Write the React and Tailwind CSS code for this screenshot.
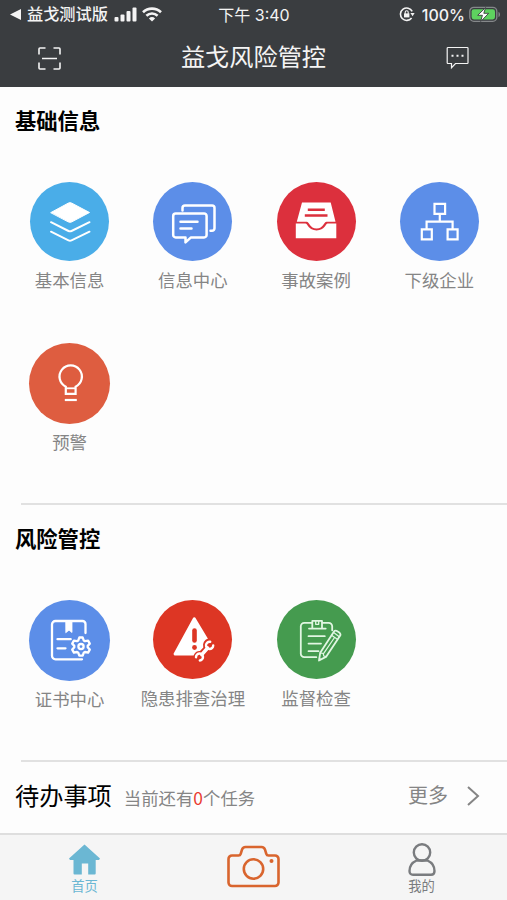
import clsx from "clsx";

const basics = [
  { label: "基本信息", color: "bg-[#4aade8]", Icon: LayersIcon },
  { label: "信息中心", color: "bg-[#5c8ee8]", Icon: MessagesIcon },
  { label: "事故案例", color: "bg-[#dc303d]", Icon: InboxIcon },
  { label: "下级企业", color: "bg-[#5c8ee8]", Icon: OrgIcon },
  { label: "预警", color: "bg-[#de5d40]", Icon: BulbIcon, large: true },
];

const risks = [
  { label: "证书中心", color: "bg-[#5c8ee8]", Icon: CertificateIcon, large: true },
  { label: "隐患排查治理", color: "bg-[#dd3624]", Icon: HazardIcon },
  { label: "监督检查", color: "bg-[#459b4f]", Icon: InspectIcon },
];

export default function App() {
  return (
    <div className="flex h-[900px] w-[507px] flex-col overflow-hidden bg-[#fdfdfd] font-['Liberation_Sans','Noto_Sans_CJK_SC',sans-serif] text-black">
      <header className="h-[87px] shrink-0 bg-[#3a3d40] text-[#f4f4f4]">
        <StatusBar />
        <NavBar />
      </header>

      <main className="flex-1">
        <section className="h-[416px] pt-[19px]">
          <SectionTitle>基础信息</SectionTitle>
          <Grid items={basics} />
        </section>
        <Divider />
        <section className="h-[255px] pt-[19px]">
          <SectionTitle>风险管控</SectionTitle>
          <Grid items={risks} />
        </section>
        <Divider />
        <TodoRow />
      </main>

      <TabBar />
    </div>
  );
}

function StatusBar() {
  return (
    <div className="grid h-[29px] grid-cols-[1fr_auto_1fr] items-center pl-[10px] pr-[6px] text-[16.2px] leading-none">
      <div className="flex items-center">
        <svg className="mr-[6px] h-[11px] w-[11px]" viewBox="0 0 11 11" fill="currentColor">
          <path d="M0 5.5 11 0v11z" />
        </svg>
        <span className="font-medium">益戈测试版</span>
        <svg className="ml-[6px] h-[15px] w-[24px]" viewBox="0 0 24 15" fill="currentColor">
          <rect x="0.5" y="10" width="4" height="4.5" rx="1" />
          <rect x="6.5" y="7.5" width="4" height="7" rx="1" />
          <rect x="12.5" y="4" width="4" height="10.5" rx="1" />
          <rect x="18.5" y="0.5" width="4" height="14" rx="1" />
        </svg>
        <svg className="ml-[4px] h-[15px] w-[20px]" viewBox="0 0 20 15" fill="none" stroke="currentColor" strokeWidth="2.6">
          <path d="M1 5.2a13 13 0 0 1 18 0" />
          <path d="M4.4 8.7a8.2 8.2 0 0 1 11.2 0" />
          <path d="M10 14.6 6.9 11.4a4.5 4.5 0 0 1 6.2 0z" fill="currentColor" stroke="none" />
        </svg>
      </div>
      <span className="mr-[3px] font-['Inter','Noto_Sans_CJK_SC',sans-serif] text-[16px]">下午 3:40</span>
      <div className="flex items-center justify-end">
        <svg className="mr-[7px] h-[15px] w-[16px]" viewBox="0 0 16 15" fill="none" stroke="currentColor" strokeWidth="1.6">
          <path d="M13.2 4.4A6.2 6.2 0 1 0 12.6 11" />
          <path d="M11.4 6h4.2l-2 3.2z" fill="currentColor" stroke="none" />
          <rect x="5" y="6.4" width="5.4" height="4" fill="currentColor" stroke="none" />
          <path d="M6.200 7V5.300a1.500 1.500 0 0 1 3 0V7" strokeWidth="1.1" />
        </svg>
        <span className="font-['Inter',sans-serif] text-[16px] font-medium">100%</span>
        <svg className="ml-[4px] h-[17px] w-[32px]" viewBox="0 0 32 17" fill="none">
          <rect x="0.8" y="1.3" width="27" height="14" rx="4" stroke="#85888a" strokeWidth="1.3" />
          <path d="M29.5 6v5c2-.6 2-4.4 0-5z" fill="#85888a" />
          <rect x="2.6" y="3.2" width="23.4" height="10.2" rx="2.3" fill="#5ed25f" />
          <path d="M16.6 1.500 8.7 9.300h4.700L11.700 15.500l8-8.200h-4.900z" fill="#fff" stroke="#3a3d40" strokeWidth="0.9" />
        </svg>
      </div>
    </div>
  );
}

function NavBar() {
  return (
    <div className="flex h-[58px] items-center justify-between px-[38px]">
      <svg className="h-[23px] w-[23px]" viewBox="0 0 23 23" fill="none" stroke="currentColor" strokeWidth="1.6">
        <path d="M1 7.5V2a1 1 0 0 1 1-1h5.500M15.500 1H21a1 1 0 0 1 1 1v5.500M22 15.500V21a1 1 0 0 1-1 1h-5.500M7.500 22H2a1 1 0 0 1-1-1v-5.500M4 11.500h15" />
      </svg>
      <h1 className="text-[24.2px] leading-none">益戈风险管控</h1>
      <svg className="h-[24px] w-[23px]" viewBox="0 0 23 24" fill="none" stroke="currentColor" strokeWidth="1.2">
        <path d="M2 1.500h19.200a.8.8 0 0 1 .8.8v14.400a.8.8 0 0 1-.8.8H9.500l-4 4.200v-4.200H2a.8.8 0 0 1-.8-.8V2.300a.8.8 0 0 1 .8-.8z" />
        <path d="M5.500 9.700h2M10.500 9.700h2M15.500 9.700h2" strokeWidth="2" />
      </svg>
    </div>
  );
}

function SectionTitle({ children }) {
  return <h2 className="pl-[15px] text-[21.3px] font-bold leading-[32px]">{children}</h2>;
}

function Divider() {
  return <div className="ml-[21px] h-[2px] bg-[#e1e1e1]" />;
}

function Grid({ items }) {
  return (
    <div className="mt-[44px] grid grid-cols-4 gap-y-[50px] pl-[8px] pr-[6px]">
      {items.map((item) => (
        <Entry key={item.label} {...item} />
      ))}
    </div>
  );
}

function Entry({ label, color, Icon, large }) {
  return (
    <div className="flex h-[111px] flex-col items-center">
      <div className="flex h-[80px] items-center justify-center">
        <div className={clsx("flex shrink-0 items-center justify-center rounded-full text-white", large ? "size-[81px]" : "size-[79px]", color)}>
          <svg className="size-[80px] shrink-0" viewBox="0 0 80 80" fill="none" stroke="currentColor" strokeWidth="2">
            <Icon />
          </svg>
        </div>
      </div>
      <span className="mt-[7px] whitespace-nowrap text-[17.4px] leading-[26px] text-[#858585]">{label}</span>
    </div>
  );
}

function LayersIcon() {
  return (
    <g strokeLinecap="round" strokeLinejoin="round">
      <path d="M21 30.500 38.500 21q1.500-.7 3 0L59.500 30.500 41.500 40q-1.500.7-3 0z" fill="currentColor" strokeWidth="1" />
      <path d="M21 40.200 38.500 49q1.500.7 3 0L59.500 40.200M21 49.700l17.500 8.600q1.500.7 3 0l18-8.600" />
    </g>
  );
}

function MessagesIcon() {
  return (
    <g strokeLinecap="round" strokeLinejoin="round" strokeWidth="2.5">
      <path d="M29.500 28.500V26a2.500 2.500 0 0 1 2.500-2.500h27a2.500 2.500 0 0 1 2.500 2.500v20.300a2.500 2.500 0 0 1-2.500 2.500h-1.500" />
      <path d="M22.700 31.400h28.400a2.500 2.500 0 0 1 2.500 2.500v19a2.500 2.500 0 0 1-2.500 2.500H38l-5.500 5v-5h-9.800a2.500 2.500 0 0 1-2.500-2.500v-19a2.500 2.500 0 0 1 2.500-2.500z" />
      <path d="M27.500 39.700h17M27.500 46.500h11" />
    </g>
  );
}

function InboxIcon() {
  return (
    <g stroke="none">
      <path d="M26 20.400h28.700l4.800 19.400H50.500c-2.500 0-3 6.700-9.900 6.700s-7.400-6.700-9.900-6.700H20.800z" fill="currentColor" />
      <path d="M19.800 41.600h9.600c2.300 0 3 6.800 11.200 6.800s8.900-6.800 11.200-6.800h8.500v14.600H19.800z" fill="currentColor" />
      <path d="M31.800 27.800h17M28.800 33.500h22.700" stroke="#dc303d" strokeWidth="2.5" />
    </g>
  );
}

function OrgIcon() {
  return (
    <g strokeWidth="2.2">
      <path d="M35.500 21.800h10.600v10H35.500zM22.800 47.400h10v10h-10zM48.600 47.400h10v10h-10z" />
      <path d="M40.800 31.800v7.900M27.600 47.400v-7.700h26v7.700" />
    </g>
  );
}

function BulbIcon() {
  return (
    <g strokeWidth="2.2">
      <path d="M35.800 50.800v-7.100a11.200 11.200 0 1 1 9.800 0v7.100z" />
      <path d="M36 45.300h9.500" strokeWidth="1.8" />
      <path d="M34.800 57h12" />
    </g>
  );
}

function CertificateIcon() {
  return (
    <g strokeLinejoin="round" strokeLinecap="round" strokeWidth="2.3">
      <path d="M55.500 33V24a3 3 0 0 0-3-3h-27a3.500 3.500 0 0 0-3.500 3.500v31.300a3.500 3.500 0 0 0 3.500 3.500H52" />
      <path d="M36 21h6v11.500l-3-2.300-3 2.300z" fill="currentColor" strokeWidth="0.8" />
      <path d="M27.500 39.200h13.200M27.500 48.300h8" />
      <path d="M49.300 37.500h3.400l1 2.900 1.300.8 3.100-.6 1.700 3-2.100 2.300v1.400l2.100 2.300-1.700 3-3.100-.6-1.300.8-1 2.900h-3.400l-1-2.900-1.300-.8-3.100.6-1.700-3 2.100-2.300v-1.400l-2.100-2.300 1.700-3 3.100.6 1.300-.8z" />
      <circle cx="51" cy="46.600" r="2.600" />
    </g>
  );
}

function HazardIcon() {
  return (
    <g strokeLinecap="round" strokeLinejoin="round">
      <path d="M41.300 19 54.500 41 42 54H22.200z" fill="currentColor" strokeWidth="3.2" />
      <path d="M41.500 30.500v10" stroke="#dd3624" strokeWidth="4.6" />
      <circle cx="41.500" cy="47.500" r="2.400" fill="#dd3624" stroke="none" />
      {/* wrench, with a red outline that cuts it out of the triangle */}
      <path d="M48.500 54.600 54.600 48M57.200 41.600a3.600 3.600 0 1 0 3 3.800" stroke="#dd3624" strokeWidth="6" />
      <path d="M43 57.200a3.500 3.500 0 1 1 3.800 3.300" stroke="#dd3624" strokeWidth="5" />
      <path d="M48.800 54.600 54.600 48" strokeWidth="3.600" />
      <path d="M57.200 41.800a3.600 3.600 0 1 0 3 3.600M43 57.200a3.500 3.500 0 1 1 3.800 3.300" strokeWidth="2.400" />
    </g>
  );
}

function InspectIcon() {
  return (
    <g className="text-[#e1f6e2]" stroke="currentColor" strokeLinecap="round" strokeLinejoin="round" strokeWidth="1.8">
      <path d="M36 22.800h-7.700a3.500 3.500 0 0 0-3.500 3.500v27.400a3.500 3.500 0 0 0 3.500 3.500h12M46.500 22.800h6.200a3.500 3.500 0 0 1 3.500 3.500v4" />
      <path d="M33 28.600h16.700M36.300 28.500v-7.600h9.700v7.600" />
      <path d="M39.700 21v3.300h3V21" strokeWidth="1.300" />
      <path d="M32.500 36.200h16.300M32.500 43.600H45M32.500 51.200h10" />
      <path d="M58.200 31.200c1.500-1.500 7 1.600 6.200 4L50.300 56.600 43 60.500l1.200-7.700z" fill="#459b4f" />
      <path d="m55.500 35.200 5.900 4.100M58 32.800l5.300 3.900M44.200 52.800l3 .7.600 2.500 2.500.6M58.200 38 47.700 53.300M43.400 58.500l1.400 1" strokeWidth="1.200" />
    </g>
  );
}

function TodoRow() {
  return (
    <div className="flex h-[70px] items-center pl-[15px] pr-[27px]">
      <h2 className="text-[24.2px] leading-none">待办事项</h2>
      <p className="ml-[12px] mt-[4px] text-[17.4px] leading-none text-[#858585]">
        当前还有<span className="font-['Noto_Sans_CJK_SC',sans-serif] text-[#e93e32]">0</span>个任务
      </p>
      <span className="mb-[2px] ml-auto text-[20px] leading-none text-[#858585]">更多</span>
      <svg className="mb-[3px] ml-[18px] h-[20px] w-[14px]" viewBox="0 0 14 20" fill="none" stroke="#858585" strokeWidth="2">
        <path d="m2 1 10 9-10 9" />
      </svg>
    </div>
  );
}

function TabBar() {
  return (
    <nav className="grid h-[67px] shrink-0 grid-cols-3 border-t-2 border-[#dedede] bg-[#f5f5f5] text-[13.3px] leading-none">
      <div className="flex flex-col items-center pt-[9px] text-[#6bb7d3]">
        <svg className="h-[31px] w-[31px]" viewBox="0 0 31 31" fill="currentColor">
          <path d="M15.500.5 31 14.500l-1 1.500h-3.300v13.500a1 1 0 0 1-1 1h-6.500V19.500h-6.400v11H5.500a1 1 0 0 1-1-1V16H1l-1-1.500z" />
        </svg>
        <span className="mt-[5px]">首页</span>
      </div>
      <div className="flex justify-center pt-[10px]">
        <svg className="h-[43px] w-[53px]" viewBox="0 0 53 43" fill="none" stroke="#d9652e" strokeWidth="2.6" strokeLinejoin="round">
          <path d="M5 10.500h6.500q1.700 0 2.200-1.600l1.300-4.300Q15.800 2 18.500 2h16q2.700 0 3.500 2.600l1.300 4.300q.5 1.600 2.200 1.600H48a3.500 3.500 0 0 1 3.500 3.500v23.500A3.500 3.500 0 0 1 48 41H5a3.500 3.500 0 0 1-3.500-3.500V14A3.500 3.500 0 0 1 5 10.500z" />
          <circle cx="26.500" cy="24" r="9.700" />
          <circle cx="44.500" cy="16" r="2" fill="#d9652e" stroke="none" />
        </svg>
      </div>
      <div className="flex flex-col items-center pr-[2px] pt-[8px] text-[#7a7c7f]">
        <svg className="h-[33px] w-[28px]" viewBox="0 0 28 33" fill="none" stroke="currentColor" strokeWidth="2.4">
          <circle cx="14" cy="9.500" r="8.200" />
          <path d="M8.500 17.500h11c4.500 2 7 6 7 10.500 0 2.300-1.300 3.800-3.500 3.800H5c-2.200 0-3.500-1.500-3.500-3.800 0-4.500 2.500-8.500 7-10.500z" />
        </svg>
        <span className="mt-[4px]">我的</span>
      </div>
    </nav>
  );
}
